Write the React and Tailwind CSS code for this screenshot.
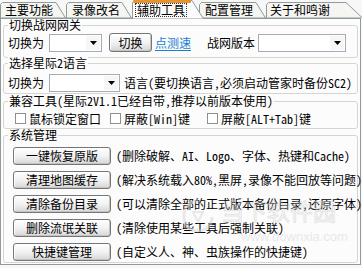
import React from "react";

function Tab({ w, s, h, active, label, className }) {
  const H = h;
  return (
    <div className={"relative shrink-0 " + className} style={{ width: w, height: H }}>
      <svg className="absolute left-0 top-0" width={w} height={H} viewBox={`0 0 ${w} ${H}`}>
        <polygon
          points={`0.5,${H} 0.5,2.5 2.5,0.5 ${w - s},0.5 ${w - 0.5},${H}`}
          fill={active ? "#fcfcfc" : "#f5f5f2"}
          stroke="#919b9c"
          strokeWidth="1"
        />
        {active ? <rect x="1" y="0" width={w - s - 2} height="3" rx="1" fill="#e8922e" /> : null}
      </svg>
      {label}
    </div>
  );
}

function Combo({ className }) {
  return (
    <div className={"flex h-[18px] items-stretch border border-[#a5acb2] bg-white " + className}>
      <div className="flex-1" />
      <div className="my-[1px] mr-[1px] flex w-[14px] items-center justify-center bg-[#f6f6f6]">
        <svg width="7" height="4" viewBox="0 0 7 4">
          <path d="M0 0H7L3.5 4Z" fill="#000" />
        </svg>
      </div>
    </div>
  );
}

function Btn({ children, className }) {
  return (
    <div
      className={
        "flex shrink-0 items-center justify-center rounded-[3px] border border-[#767676] bg-linear-to-b from-[#ffffff] via-[#f2f2f2] to-[#d6d6d6] leading-[12px] shadow-[inset_-1px_-1px_0_#c4c4c4,inset_1px_1px_0_#ffffff] " +
        className
      }
    >
      {children}
    </div>
  );
}

function Group({ title, className, children }) {
  return (
    <div className={"relative mx-[2px] rounded-[3px] border border-[#d6d6ce] " + className}>
      <span className="absolute -top-[7px] left-[4px] whitespace-nowrap bg-[#fcfcfc] px-[1px] leading-[12px]">{title}</span>
      {children}
    </div>
  );
}

function Check({ label, className }) {
  return (
    <div className={"flex h-[13px] shrink-0 items-center " + className}>
      <div className="h-[11px] w-[11px] border border-[#8e8f8f] bg-white" />
      <span className="ml-[3px] whitespace-nowrap leading-[12px]">{label}</span>
    </div>
  );
}

export default function App() {
  const sysRows = [
    ["一键恢复原版", "(删除破解、AI、Logo、字体、热键和Cache)"],
    ["清理地图缓存", "(解决系统载入80%,黑屏,录像不能回放等问题)"],
    ["清除备份目录", "(可以清除全部的正式版本备份目录,还原字体)"],
    ["删除流氓关联", "(清除使用某些工具后强制关联)"],
    ["快捷键管理", "(自定义人、神、虫族操作的快捷键)"],
  ];
  return (
    <div className="relative h-[268px] w-[362px] overflow-hidden bg-[#f7f7f7] text-[12px] leading-[12px] text-black [font-family:'Noto_Sans_Mono_CJK_SC','Noto_Sans_CJK_SC',sans-serif]">
      {/* tab strip */}
      <div className="flex h-[18px] items-start">
        <Tab
          w={66}
          s={10}
          h={16}
          className="mt-[2px]"
          label={<span className="absolute left-[5px] top-[2px] leading-[12px]">主要功能</span>}
        />
        <Tab
          w={66}
          s={10}
          h={16}
          className="mt-[2px]"
          label={<span className="absolute left-[6px] top-[2px] leading-[12px]">录像改名</span>}
        />
        <Tab
          w={72}
          s={12}
          h={19}
          active
          className="z-10"
          label={
            <span className="absolute left-[3px] top-[3px] border border-dotted border-[#333] px-[1px] leading-[12px]">
              辅助工具
            </span>
          }
        />
        <Tab
          w={67}
          s={10}
          h={16}
          className="-ml-[5px] mt-[2px]"
          label={<span className="absolute left-[6px] top-[2px] leading-[12px]">配置管理</span>}
        />
        <Tab
          w={97}
          s={17}
          h={16}
          className="mt-[2px]"
          label={<span className="absolute left-[4px] top-[2px] leading-[12px]">关于和鸣谢</span>}
        />
      </div>

      {/* panel */}
      <div className="flex h-[247px] w-[361px] flex-col border border-[#919b9c] bg-[#fcfcfc]">
        <Group title="切换战网网关" className="mt-[6px] h-[33px] pt-[7px]">
          <div className="flex h-[19px] items-center pl-[4px]">
            <span className="w-[36px] shrink-0">切换为</span>
            <Combo className="ml-[5px] w-[53px]" />
            <Btn className="ml-[7px] h-[19px] w-[43px]">切换</Btn>
            <span className="ml-[3px] text-[#1a7fd6] underline underline-offset-2">点测速</span>
            <span className="ml-[16px] w-[48px] shrink-0">战网版本</span>
            <Combo className="ml-[3px] w-[88px]" />
          </div>
        </Group>

        <Group title="选择星际2语言" className="mt-[5px] h-[31px] pt-[10px]">
          <div className="flex h-[18px] items-center pl-[4px]">
            <span className="w-[36px] shrink-0">切换为</span>
            <Combo className="ml-[5px] w-[71px]" />
            <span className="ml-[4px] whitespace-nowrap">语言(要切换语言,必须启动管家时备份SC2)</span>
          </div>
        </Group>

        <Group title="兼容工具(星际2V1.1已经自带,推荐以前版本使用)" className="mt-[7px] h-[28px] pt-[10px]">
          <div className="flex items-center pl-[11px]">
            <Check label="鼠标锁定窗口" className="w-[95px]" />
            <Check label="屏蔽[Win]键" className="w-[97px]" />
            <Check label="屏蔽[ALT+Tab]键" />
          </div>
        </Group>

        <Group title="系统管理" className="mt-[6px] h-[128px] pt-[11px]">
          <div className="flex flex-col gap-[6px] pl-[9px]">
            {sysRows.map(([b, d]) => (
              <div key={b} className="flex h-[18px] items-center">
                <Btn className="h-[18px] w-[98px]">{b}</Btn>
                <span className="ml-[5px] whitespace-nowrap">{d}</span>
              </div>
            ))}
          </div>
        </Group>
      </div>

      {/* watermark */}
      <div className="pointer-events-none absolute left-[181px] top-[198px] flex items-start opacity-50">
        <svg width="34" height="36" viewBox="0 0 34 36">
          <path d="M17 3 C8 3 3 10 3 18 C3 27 9 33 17 33 C25 33 31 27 31 19" fill="none" stroke="#d6d6d6" strokeWidth="3" />
          <path d="M12 14 L22 14 L17 24 Z" fill="none" stroke="#d6d6d6" strokeWidth="2" />
        </svg>
        <div className="ml-[6px] flex flex-col">
          <span className="text-[23px] leading-[24px] text-transparent [-webkit-text-stroke:1px_#cfcfcf]">当下软件园</span>
          <span className="ml-[20px] mt-[9px] text-[13px] leading-[12px] text-[#d6d6d6] [font-family:'Liberation_Sans',sans-serif]">
            www.downxia.com
          </span>
        </div>
      </div>
    </div>
  );
}
